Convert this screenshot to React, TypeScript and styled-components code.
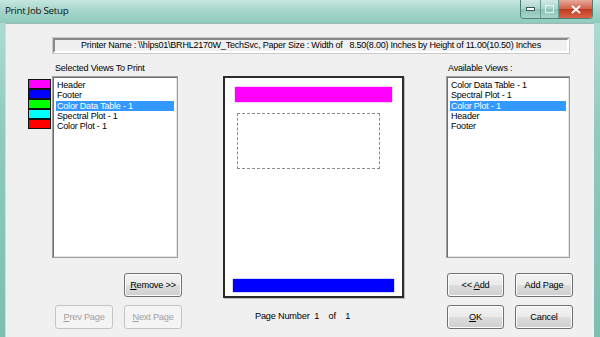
import React from 'react'
import styled, { createGlobalStyle, css } from 'styled-components'

const GlobalStyle = createGlobalStyle`
  html, body {
    margin: 0;
    padding: 0;
    overflow: hidden;
    background: #6fb3a6;
  }
  body {
    font-family: 'Liberation Sans', Arial, sans-serif;
  }
`

const Window = styled.div`
  width: 600px;
  height: 337px;
  display: flex;
  flex-direction: column;
  background: linear-gradient(180deg, #b4ddd5 0%, #8fcabe 40%, #7cbfb2 100%);
  overflow: hidden;
`

const TitleBar = styled.div`
  height: 23px;
  display: flex;
  align-items: flex-start;
  padding: 0 7px 0 5px;
  background: linear-gradient(180deg, #c6e6df 0%, #a6d6cc 45%, #8fcabe 100%);
`

const Title = styled.div`
  flex: 1;
  font-family: 'Open Sans', 'Liberation Sans', sans-serif;
  font-size: 9.8px;
  line-height: 22px;
  color: #111;
  letter-spacing: -0.3px;
`

const Caption = styled.div`
  display: flex;
  height: 18px;
  border: 1px solid #4f7f77;
  border-top: none;
  border-radius: 0 0 4px 4px;
  overflow: hidden;
`

const CaptionButton = styled.div<{ $close?: boolean; $w: number }>`
  width: ${(p) => p.$w}px;
  display: flex;
  align-items: center;
  justify-content: center;
  background: linear-gradient(180deg, #cfe8e3 0%, #a9d3cb 50%, #8dc2b7 51%, #a6d4ca 100%);
  border-right: 1px solid #6c9a92;
  ${(p) =>
    p.$close &&
    css`
      border-right: none;
      background: linear-gradient(180deg, #e9a99b 0%, #d0604a 50%, #c2391f 51%, #d8644a 100%);
    `}
`

const Client = styled.div`
  flex: 1;
  margin: 0 6px 0 5px;
  background: #f0f0f0;
  border-left: 1px solid #cfdcd9;
  border-top: 1px solid #9fb8b3;
  display: flex;
  flex-direction: column;
  font-size: 10px;
  color: #000;
`

const PrinterBox = styled.div`
  margin: 14px 0 0 47px;
  width: 512px;
  height: 11px;
  border: 2px solid;
  border-color: #8a8a8a #ffffff #ffffff #8a8a8a;
  outline: 1px solid #c9c9c9;
  text-align: center;
  font-size: 9px;
  line-height: 11px;
  white-space: pre;
  letter-spacing: -0.22px;
`

const Main = styled.div`
  display: flex;
  margin-top: 10px;
  padding-left: 22px;
`

const Column = styled.div<{ $offset: number; $width: number }>`
  display: flex;
  flex-direction: column;
  margin-left: ${(p) => p.$offset}px;
  width: ${(p) => p.$width}px;
`

const Label = styled.div<{ $indent: number }>`
  height: 13px;
  padding-left: ${(p) => p.$indent}px;
  font-size: 9px;
  line-height: 10px;
  letter-spacing: -0.2px;
`

const ListRow = styled.div`
  display: flex;
  gap: 1px;
`

const Swatches = styled.div`
  display: flex;
  flex-direction: column;
  margin-top: 3px;
  width: 23px;
`

const Swatch = styled.div<{ $color: string }>`
  height: 8px;
  border: 1px solid #111;
  background: ${(p) => p.$color};
`

const ListBox = styled.div<{ $width: number }>`
  width: ${(p) => p.$width}px;
  height: 182px;
  box-sizing: border-box;
  background: #fff;
  border: 1px solid #a0a0a0;
  box-shadow: inset 1px 1px 0 #6e6e6e, inset -1px -1px 0 #e3e3e3;
  padding: 3px 3px 0 3px;
  display: flex;
  flex-direction: column;
`

const ListItem = styled.div<{ $selected?: boolean }>`
  height: 10.3px;
  font-size: 9px;
  line-height: 10.3px;
  padding-left: 1px;
  letter-spacing: -0.2px;
  white-space: nowrap;
  ${(p) =>
    p.$selected &&
    css`
      background: #3399ff;
      color: #fff;
    `}
`

const ButtonGrid = styled.div<{ $indent: number; $cols: string }>`
  display: grid;
  grid-template-columns: ${(p) => p.$cols};
  column-gap: 11px;
  row-gap: 8px;
  margin: 15px 0 0 ${(p) => p.$indent}px;
`

const Button = styled.div<{ $disabled?: boolean; $col?: number }>`
  grid-column: ${(p) => p.$col ?? 'auto'};
  height: 24px;
  box-sizing: border-box;
  border: 1px solid #707070;
  border-radius: 3px;
  background: linear-gradient(180deg, #f2f2f2 0%, #ebebeb 49%, #dddddd 50%, #cfcfcf 100%);
  box-shadow: inset 0 0 0 1px #fcfcfc;
  display: flex;
  align-items: center;
  justify-content: center;
  font-size: 9.2px;
  letter-spacing: -0.2px;
  color: #000;
  u {
    text-decoration: underline;
  }
  ${(p) =>
    p.$disabled &&
    css`
      border-color: #c2c5c7;
      background: #f4f4f4;
      box-shadow: none;
      color: #a0a0a0;
    `}
`

const Preview = styled.div`
  margin-top: 13px;
  width: 181px;
  height: 222px;
  box-sizing: border-box;
  background: #fff;
  border: 2px solid #2b2b2b;
  box-shadow: 1px 1px 0 #bdbdbd;
  display: flex;
  flex-direction: column;
  padding: 9px 10px 4px 10px;
`

const Band = styled.div<{ $color: string }>`
  height: 15px;
  background: ${(p) => p.$color};
  box-shadow: 0 0 1px ${(p) => p.$color};
`

const Placeholder = styled.div`
  margin: 11px 12px 0 2px;
  height: 54px;
  border: 1px dashed #8c8c8c;
`

const Spacer = styled.div`
  flex: 1;
`

const FooterBand = styled(Band)`
  height: 13px;
  margin: 0 -2px;
`

const PageNumber = styled.div`
  margin: 13px 0 0 32px;
  font-size: 9.2px;
  letter-spacing: -0.2px;
  white-space: pre;
`

const selectedViews = [
  { name: 'Header', color: '#ff00ff' },
  { name: 'Footer', color: '#0000ff' },
  { name: 'Color Data Table - 1', color: '#00ff00', selected: true },
  { name: 'Spectral Plot - 1', color: '#00ffff' },
  { name: 'Color Plot - 1', color: '#ff0000' },
]

const availableViews = [
  { name: 'Color Data Table - 1' },
  { name: 'Spectral Plot - 1' },
  { name: 'Color Plot - 1', selected: true },
  { name: 'Header' },
  { name: 'Footer' },
]

export default function App() {
  return (
    <>
      <GlobalStyle />
      <Window>
        <TitleBar>
          <Title>Print Job Setup</Title>
          <Caption>
            <CaptionButton $w={19}>
              <svg width="9" height="4" viewBox="0 0 9 4">
                <rect x="0.5" y="0.5" width="8" height="3" fill="#fff" stroke="#3a5c57" />
              </svg>
            </CaptionButton>
            <CaptionButton $w={17}>
              <svg width="9" height="8" viewBox="0 0 9 8">
                <rect x="0.5" y="0.5" width="8" height="7" fill="none" stroke="#e8f4f1" />
              </svg>
            </CaptionButton>
            <CaptionButton $w={33} $close>
              <svg width="10" height="9" viewBox="0 0 10 9">
                <path d="M1 1 L9 8 M9 1 L1 8" stroke="#fff" strokeWidth="2" />
              </svg>
            </CaptionButton>
          </Caption>
        </TitleBar>
        <Client>
          <PrinterBox>
            {'Printer Name : \\\\hlps01\\BRHL2170W_TechSvc, Paper Size : Width of   8.50(8.00) Inches by Height of 11.00(10.50) Inches'}
          </PrinterBox>
          <Main>
            <Column $offset={0} $width={153}>
              <Label $indent={27}>Selected Views To Print</Label>
              <ListRow>
                <Swatches>
                  {selectedViews.map((v) => (
                    <Swatch key={v.name} $color={v.color} />
                  ))}
                </Swatches>
                <ListBox $width={126}>
                  {selectedViews.map((v) => (
                    <ListItem key={v.name} $selected={v.selected}>
                      {v.name}
                    </ListItem>
                  ))}
                </ListBox>
              </ListRow>
              <ButtonGrid $indent={27} $cols="58px 58px">
                <Button $col={2}>
                  <span>
                    <u>R</u>emove &gt;&gt;
                  </span>
                </Button>
                <Button $disabled>
                  <span>
                    <u>P</u>rev Page
                  </span>
                </Button>
                <Button $disabled>
                  <span>
                    <u>N</u>ext Page
                  </span>
                </Button>
              </ButtonGrid>
            </Column>
            <Column $offset={42} $width={181}>
              <Preview>
                <Band $color="#ff00ff" />
                <Placeholder />
                <Spacer />
                <FooterBand $color="#0000ff" />
              </Preview>
              <PageNumber>{'Page Number  1    of    1'}</PageNumber>
            </Column>
            <Column $offset={42} $width={127}>
              <Label $indent={2}>Available Views :</Label>
              <ListBox $width={124}>
                {availableViews.map((v) => (
                  <ListItem key={v.name} $selected={v.selected}>
                    {v.name}
                  </ListItem>
                ))}
              </ListBox>
              <ButtonGrid $indent={1} $cols="57px 58px">
                <Button>
                  <span>
                    &lt;&lt; <u>A</u>dd
                  </span>
                </Button>
                <Button>Add Page</Button>
                <Button>
                  <span>
                    <u>O</u>K
                  </span>
                </Button>
                <Button>Cancel</Button>
              </ButtonGrid>
            </Column>
          </Main>
        </Client>
      </Window>
    </>
  )
}
